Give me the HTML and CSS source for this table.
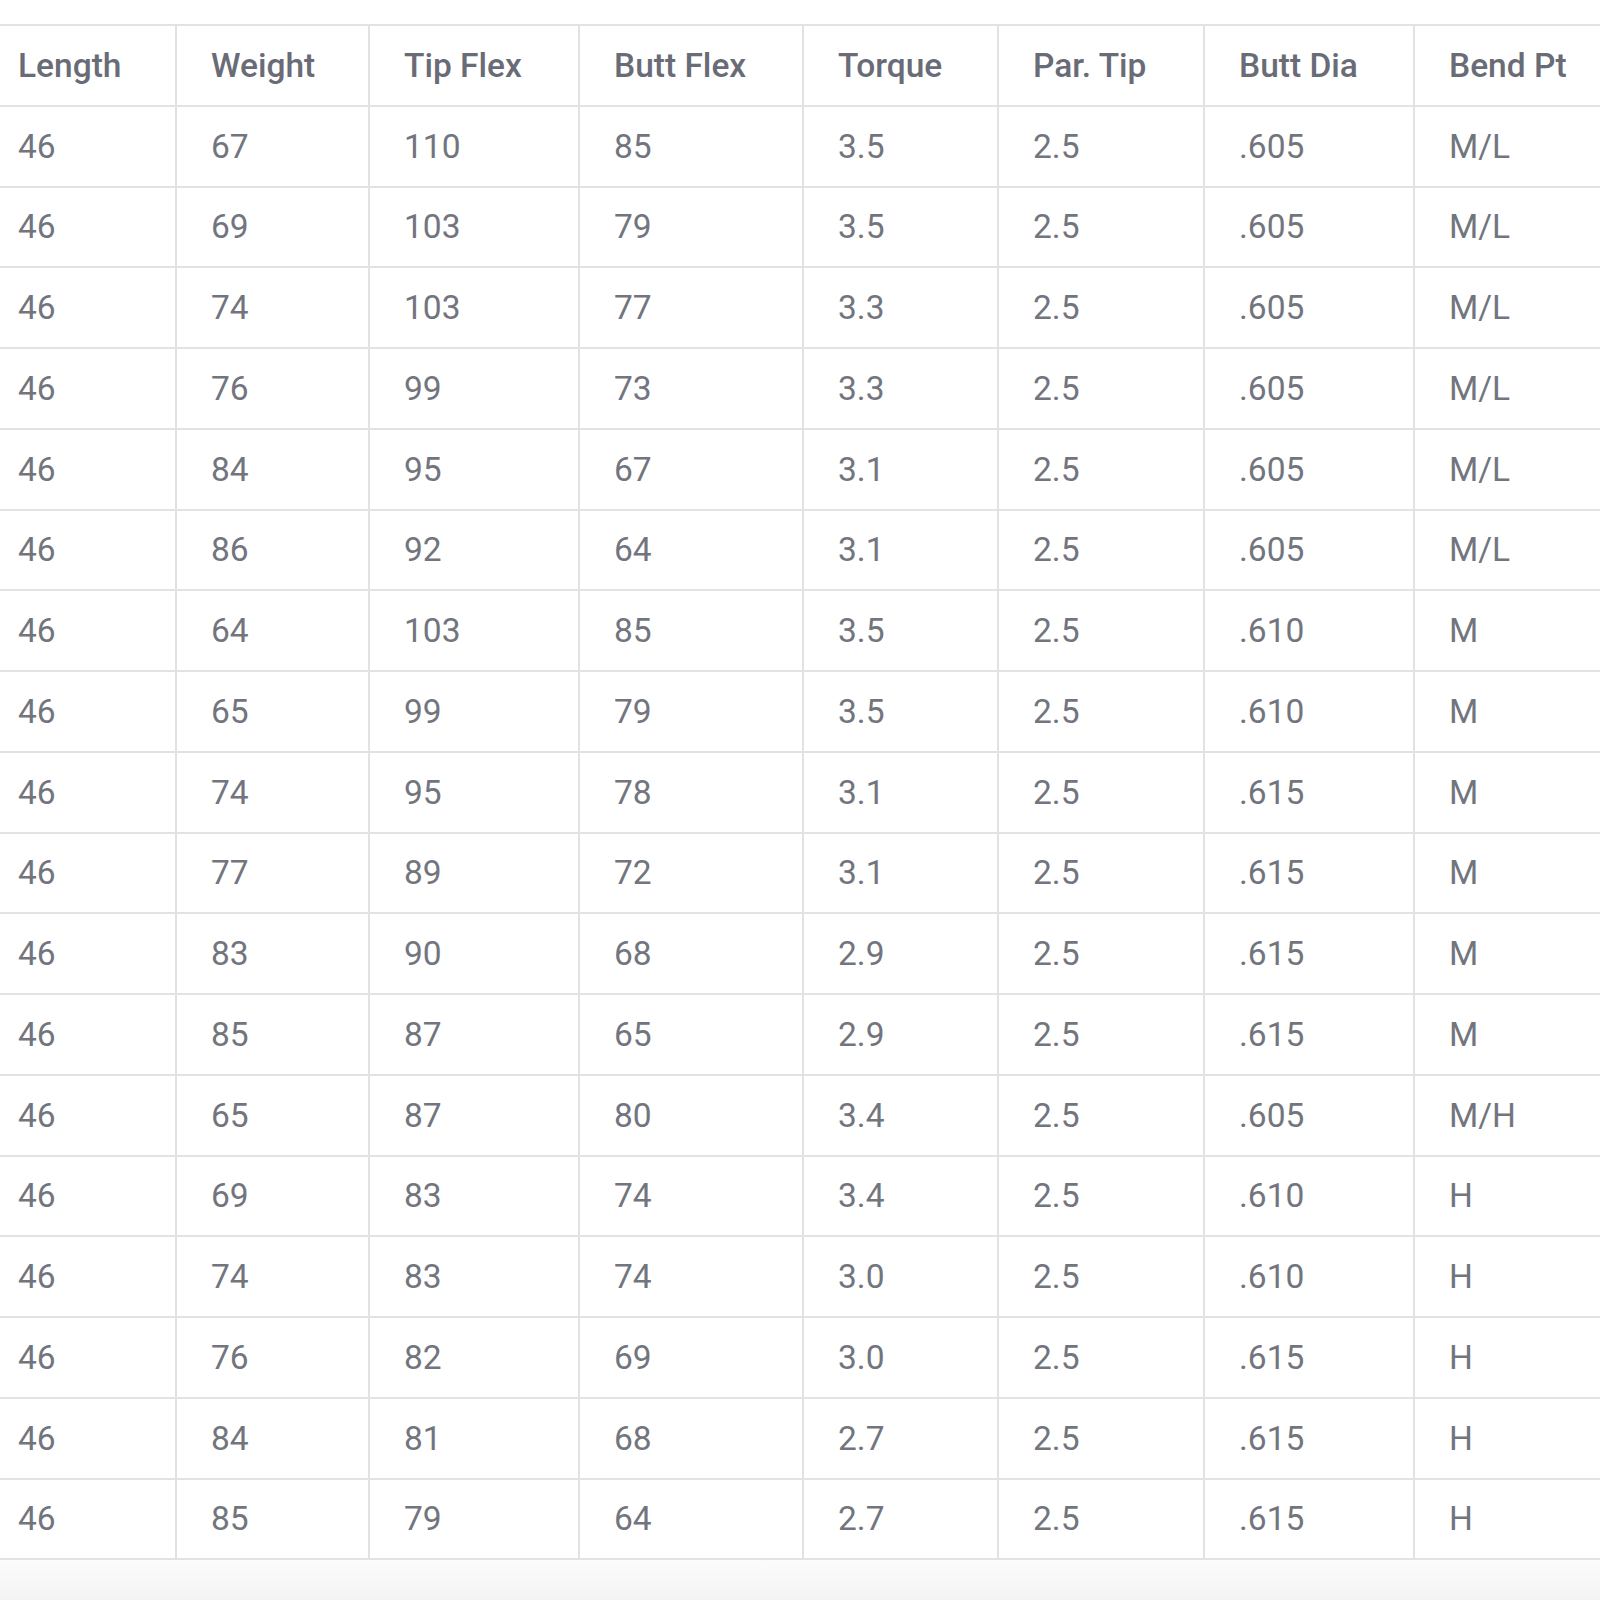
FILE: index.html
```html
<!DOCTYPE html>
<html lang="en">
<head>
<meta charset="utf-8">
<title>Shaft Specs</title>
<link rel="stylesheet" href="styles.css">
</head>
<body>
<div class="page">
  <div class="wrap">
    <table class="specs">
      <colgroup>
        <col class="c1"><col class="c2"><col class="c3"><col class="c4"><col class="c5"><col class="c6"><col class="c7"><col class="c8">
      </colgroup>
      <thead>
        <tr><th>Length</th><th>Weight</th><th>Tip Flex</th><th>Butt Flex</th><th>Torque</th><th>Par. Tip</th><th>Butt Dia</th><th>Bend Pt</th></tr>
      </thead>
      <tbody>
        <tr><td>46</td><td>67</td><td>110</td><td>85</td><td>3.5</td><td>2.5</td><td>.605</td><td>M/L</td></tr>
        <tr><td>46</td><td>69</td><td>103</td><td>79</td><td>3.5</td><td>2.5</td><td>.605</td><td>M/L</td></tr>
        <tr><td>46</td><td>74</td><td>103</td><td>77</td><td>3.3</td><td>2.5</td><td>.605</td><td>M/L</td></tr>
        <tr><td>46</td><td>76</td><td>99</td><td>73</td><td>3.3</td><td>2.5</td><td>.605</td><td>M/L</td></tr>
        <tr><td>46</td><td>84</td><td>95</td><td>67</td><td>3.1</td><td>2.5</td><td>.605</td><td>M/L</td></tr>
        <tr><td>46</td><td>86</td><td>92</td><td>64</td><td>3.1</td><td>2.5</td><td>.605</td><td>M/L</td></tr>
        <tr><td>46</td><td>64</td><td>103</td><td>85</td><td>3.5</td><td>2.5</td><td>.610</td><td>M</td></tr>
        <tr><td>46</td><td>65</td><td>99</td><td>79</td><td>3.5</td><td>2.5</td><td>.610</td><td>M</td></tr>
        <tr><td>46</td><td>74</td><td>95</td><td>78</td><td>3.1</td><td>2.5</td><td>.615</td><td>M</td></tr>
        <tr><td>46</td><td>77</td><td>89</td><td>72</td><td>3.1</td><td>2.5</td><td>.615</td><td>M</td></tr>
        <tr><td>46</td><td>83</td><td>90</td><td>68</td><td>2.9</td><td>2.5</td><td>.615</td><td>M</td></tr>
        <tr><td>46</td><td>85</td><td>87</td><td>65</td><td>2.9</td><td>2.5</td><td>.615</td><td>M</td></tr>
        <tr><td>46</td><td>65</td><td>87</td><td>80</td><td>3.4</td><td>2.5</td><td>.605</td><td>M/H</td></tr>
        <tr><td>46</td><td>69</td><td>83</td><td>74</td><td>3.4</td><td>2.5</td><td>.610</td><td>H</td></tr>
        <tr><td>46</td><td>74</td><td>83</td><td>74</td><td>3.0</td><td>2.5</td><td>.610</td><td>H</td></tr>
        <tr><td>46</td><td>76</td><td>82</td><td>69</td><td>3.0</td><td>2.5</td><td>.615</td><td>H</td></tr>
        <tr><td>46</td><td>84</td><td>81</td><td>68</td><td>2.7</td><td>2.5</td><td>.615</td><td>H</td></tr>
        <tr><td>46</td><td>85</td><td>79</td><td>64</td><td>2.7</td><td>2.5</td><td>.615</td><td>H</td></tr>
      </tbody>
    </table>
  </div>
  <div class="footer-shade"></div>
</div>
</body>
</html>
```

FILE: styles.css
```css
html, body {
  margin: 0;
  padding: 0;
  overflow: hidden;
  background: #ffffff;
}

.page {
  width: 1600px;
  height: 1600px;
  display: flex;
  flex-direction: column;
  overflow: hidden;
}

.wrap {
  padding-top: 24px;
  margin-left: -18px;
}

.specs {
  border-collapse: collapse;
  table-layout: fixed;
  width: 1650px;
  font-family: Roboto, "Liberation Sans", sans-serif;
  font-size: 33.5px;
  color: #72757e;
}

.c1 { width: 193px; }
.c2 { width: 193px; }
.c3 { width: 210px; }
.c4 { width: 224px; }
.c5 { width: 195px; }
.c6 { width: 206px; }
.c7 { width: 210px; }
.c8 { width: 219px; }

.specs th,
.specs td {
  border: 2px solid #e2e2e4;
  height: 80.75px;
  padding: 0 0 0 34px;
  text-align: left;
  vertical-align: middle;
  white-space: nowrap;
  box-sizing: border-box;
}

.specs th {
  font-weight: 500;
  color: #696c76;
}

.specs td {
  font-weight: 400;
}

.footer-shade {
  flex: 1;
  background: linear-gradient(#fbfbfb, #f4f4f4);
}
```
